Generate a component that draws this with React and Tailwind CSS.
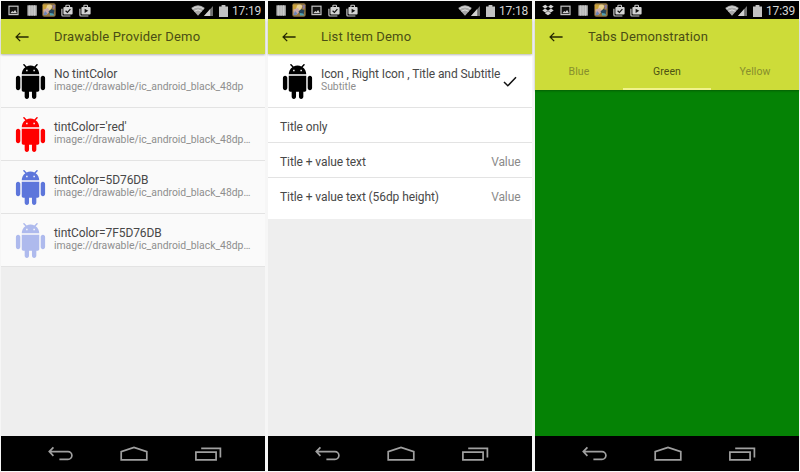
import React from 'react';

const androidPath =
  'M6 18c0 .55.45 1 1 1h1v3.5c0 .83.67 1.5 1.5 1.5s1.5-.67 1.5-1.5V19h2v3.5c0 .83.67 1.5 1.5 1.5s1.5-.67 1.5-1.5V19h1c.55 0 1-.45 1-1V8H6v10zM3.5 8C2.67 8 2 8.67 2 9.5v7c0 .83.67 1.5 1.5 1.5S5 17.33 5 16.5v-7C5 8.67 4.33 8 3.5 8zm17 0c-.83 0-1.5.67-1.5 1.5v7c0 .83.67 1.5 1.5 1.5s1.5-.67 1.5-1.5v-7c0-.83-.67-1.5-1.5-1.5zm-4.97-5.84l1.3-1.3c.2-.2.2-.51 0-.71-.2-.2-.51-.2-.71 0l-1.48 1.48C13.85 1.23 12.95 1 12 1c-.96 0-1.86.23-2.66.63L7.85.15c-.2-.2-.51-.2-.71 0-.2.2-.2.51 0 .71l1.31 1.31C6.97 3.26 6 5.01 6 7h12c0-1.99-.97-3.75-2.47-4.84zM10 5H9V4h1v1zm5 0h-1V4h1v1z';

function AndroidIcon({ color }) {
  return (
    <svg viewBox="0 0 24 24" className={`h-[35px] w-[35px] shrink-0 ${color}`} fill="currentColor">
      <path d={androidPath} />
    </svg>
  );
}

function Dropbox() {
  return (
    <svg viewBox="0 0 12 12" className="h-3 w-3" fill="#d2d2d2">
      <path d="M3.3.8 6 2.7 3 4.6.3 2.6zM8.7.8l3 1.8L9 4.6 6 2.7zM.3 6.5 3 4.6l3 1.9-2.7 1.9zM11.7 6.5 9 4.6 6 6.5l2.7 1.9zM3.2 9l2.8-1.9L8.8 9v.6L6 11.3 3.2 9.6z" />
    </svg>
  );
}

function Picture() {
  return (
    <svg viewBox="0 0 11 11" className="h-[11px] w-[11px]">
      <rect x="1" y="1.2" width="9" height="8.4" fill="#111" stroke="#c4c4c4" strokeWidth="1.2" />
      <path d="M2.3 8.2 4.2 5.9l1.2 1.2 1.7-2L9 8.2z" fill="#d0d0d0" />
    </svg>
  );
}

function Grid() {
  return (
    <svg viewBox="0 0 10 11" className="h-[11px] w-[10px]">
      <rect x=".4" y=".3" width="9.4" height="10.4" fill="#b5b5b5" />
      <path d="M2.7.3v10.4M5.1.3v10.4M7.5.3v10.4" stroke="#cfcfcf" strokeWidth=".8" />
    </svg>
  );
}

function Game() {
  return (
    <svg viewBox="0 0 14 14" className="h-3.5 w-3.5">
      <rect x=".3" y=".3" width="13.4" height="13.4" rx="2" fill="#8f7340" />
      <path d="M1 1.5h6L4 6 1 9z" fill="#c9a03a" />
      <path d="M5 2.5Q8 .5 10.5 3L9 6.5 6 8 4 6z" fill="#e8cf8e" />
      <path d="M1.5 6.5 6 5l2 3-3 3.5-3.5.5z" fill="#c9a9a9" />
      <path d="m6.5 8.5 3-2.5 3 1.5-1 4-3.5-.5z" fill="#26465c" />
      <path d="m8 10 3 .5 1.5 2H8z" fill="#4f9fb0" />
      <path d="M10.5 2h2.3v3.5L11 6z" fill="#8b7ba0" />
      <path d="m3 8 2.5 2.5-2 1.7L1.5 12z" fill="#6d86b8" />
    </svg>
  );
}

function Store({ play }) {
  return (
    <svg viewBox="0 0 12 13" className="h-[13px] w-3">
      <path d="M.9 4.8v6.3q0 .9.9.9h7.6" fill="none" stroke="#c8c8c8" strokeWidth="1.2" />
      <path d="M4.9 3.2V1.9q0-.6.6-.6h2.4q.6 0 .6.6v1.3" fill="none" stroke="#c8c8c8" strokeWidth="1.1" />
      <rect x="2.4" y="3" width="9.2" height="7.6" rx="1" fill="#d2d2d2" />
      {play ? (
        <path d="m5.6 4.8 3.7 2-3.7 2.1z" fill="#111" />
      ) : (
        <path d="m4.6 6.8 1.8 1.7 3-3.3" fill="none" stroke="#111" strokeWidth="1.2" />
      )}
    </svg>
  );
}

function Wifi() {
  return (
    <svg viewBox="0 0 14 11" className="h-[11px] w-3.5">
      <path d="M.2 3Q7-2.4 13.8 3L7 10.8z" fill="#a8a8a8" />
      <path d="M1.3 4Q7-.2 12.7 4M3.4 6.2Q7 3.6 10.6 6.2" fill="none" stroke="#e0e0e0" strokeWidth="1" />
    </svg>
  );
}

function Signal() {
  return (
    <svg viewBox="0 0 9 10" className="-ml-px h-2.5 w-[9px]">
      <path d="M0 10 9 0v10z" fill="#707070" />
      <path d="M0 10 6.2 3.1V10z" fill="#d0d0d0" />
    </svg>
  );
}

function Battery() {
  return (
    <svg viewBox="0 0 9 12" className="ml-[5.5px] h-3 w-[9px]" fill="#c2c2c2">
      <path d="M2.6 0h3.8v1.4H9V12H0V1.4h2.6z" />
    </svg>
  );
}

const statusIcons = {
  dropbox: <Dropbox />,
  picture: <Picture />,
  grid: <Grid />,
  game: <Game />,
  check: <Store />,
  play: <Store play />,
};

function StatusBar({ icons, time }) {
  return (
    <div className="flex h-[18px] shrink-0 items-center bg-black pr-1 pl-1">
      {icons.map((name) => (
        <span key={name} className="flex w-[17.7px] shrink-0 justify-center">
          {statusIcons[name]}
        </span>
      ))}
      <span className="ml-auto flex items-center pt-px">
        <Wifi />
        <Signal />
        <Battery />
        <span className="ml-[4.5px] w-[29px] text-[12px] leading-[18px] tracking-[-0.15px] whitespace-nowrap text-[#d6d6d6]">
          {time}
        </span>
      </span>
    </div>
  );
}

function Toolbar({ title }) {
  return (
    <div className="flex h-[35px] shrink-0 items-center pt-px pl-[13.5px]">
      <svg viewBox="0 0 14 10" className="h-2.5 w-3.5 shrink-0" fill="none" stroke="#262800" strokeWidth="1.3">
        <path d="M13.6 5H1.4M5.2.9 1.1 5l4.1 4.1" />
      </svg>
      <h1 className="ml-[25.5px] text-[13px] tracking-[0.17px] whitespace-nowrap text-[#4a4e14]">{title}</h1>
    </div>
  );
}

function NavBar() {
  return (
    <div className="flex h-[35px] shrink-0 items-center bg-black pl-[46.5px]">
      <svg viewBox="0 0 174 16" className="h-4 w-[174px]" fill="none" stroke="#a0a0a0" strokeWidth="1.7">
        <path d="M5.4 1.4 1.3 5.6l4.1 4.2M1.4 5.6H20a3.7 3.7 0 0 1 0 7.8h-8.6" />
        <path d="M73.2 13.8V5.7L86 1.4l12.8 4.3v8.1z" />
        <path d="M147.9 6.1h20.2v7.8h-20.2zM153.2 2.3h19.2v9.2" />
      </svg>
    </div>
  );
}

function Phone({ icons, time, children }) {
  return (
    <section className="flex h-[470px] w-[264px] shrink-0 flex-col bg-[#eeeeee]">
      <StatusBar icons={icons} time={time} />
      <div className="flex min-h-0 flex-1 flex-col">{children}</div>
      <NavBar />
    </section>
  );
}

const barClass = 'relative shrink-0 bg-[#cddc39] shadow-[0_1px_2px_rgba(0,0,0,0.28)]';

const drawables = [
  { title: 'No tintColor', sub: 'image://drawable/ic_android_black_48dp', color: 'text-black' },
  { title: "tintColor='red'", sub: 'image://drawable/ic_android_black_48dp…', color: 'text-[#ff0000]' },
  { title: 'tintColor=5D76DB', sub: 'image://drawable/ic_android_black_48dp…', color: 'text-[#5d76db]' },
  { title: 'tintColor=7F5D76DB', sub: 'image://drawable/ic_android_black_48dp…', color: 'text-[#aebaed]' },
];

function IconRow({ title, sub, color, right }) {
  return (
    <div className="flex h-[53px] items-center border-b border-[#e3e3e3] pl-3">
      <AndroidIcon color={color} />
      <div className="-mt-0.5 ml-[6px] whitespace-nowrap">
        <div className="text-[12px] leading-[14px] tracking-[-0.09px] text-[#484848]">{title}</div>
        <div className="text-[10.4px] leading-[12px] tracking-[-0.02px] text-[#8e8e8e]">{sub}</div>
      </div>
      {right}
    </div>
  );
}

function TextRow({ title, value, tall }) {
  return (
    <div
      className={`flex items-center justify-between pr-[11.5px] pl-3 text-[12px] tracking-[-0.09px] ${
        tall ? 'h-[41px] pb-1' : 'h-[35px] border-b border-[#e3e3e3] pt-[3px]'
      }`}
    >
      <span className="text-[#484848]">{title}</span>
      {value && <span className="text-[#8a8a8a]">{value}</span>}
    </div>
  );
}

export default function App() {
  return (
    <main className="flex h-[472px] w-[800px] gap-[3px] overflow-hidden bg-[#f6f6f6] py-px pl-px font-['Roboto',sans-serif]">
      <Phone icons={['picture', 'grid', 'game', 'check', 'play']} time="17:19">
        <header className={barClass}>
          <Toolbar title="Drawable Provider Demo" />
        </header>
        <div className="bg-[#fafafa] pt-px">
          {drawables.map((d) => (
            <IconRow key={d.title} {...d} />
          ))}
        </div>
      </Phone>

      <Phone icons={['grid', 'game', 'picture', 'check', 'play']} time="17:18">
        <header className={barClass}>
          <Toolbar title="List Item Demo" />
        </header>
        <div className="bg-white pt-px">
          <IconRow
            title="Icon , Right Icon , Title and Subtitle"
            sub="Subtitle"
            color="text-black"
            right={
              <svg viewBox="0 0 14 11" className="ml-[3px] h-[11px] w-3.5 shrink-0" fill="none" stroke="#111" strokeWidth="1.5">
                <path d="m1 6 3.8 3.8L13 1.2" />
              </svg>
            }
          />
          <TextRow title="Title only" />
          <TextRow title="Title + value text" value="Value" />
          <TextRow title="Title + value text (56dp height)" value="Value" tall />
        </div>
      </Phone>

      <Phone icons={['dropbox', 'picture', 'grid', 'game', 'check', 'play']} time="17:39">
        <header className={barClass}>
          <Toolbar title="Tabs Demonstration" />
          <nav className="grid h-9 grid-cols-3 text-center text-[10.5px] leading-[33px] tracking-[0.1px]">
            <span className="pt-px text-[#878f2d]">Blue</span>
            <span className="border-b-2 border-[#f0f28c] pt-px text-[#4e5212]">Green</span>
            <span className="pt-px text-[#878f2d]">Yellow</span>
          </nav>
        </header>
        <div className="flex-1 bg-[#058205]" />
      </Phone>
    </main>
  );
}
